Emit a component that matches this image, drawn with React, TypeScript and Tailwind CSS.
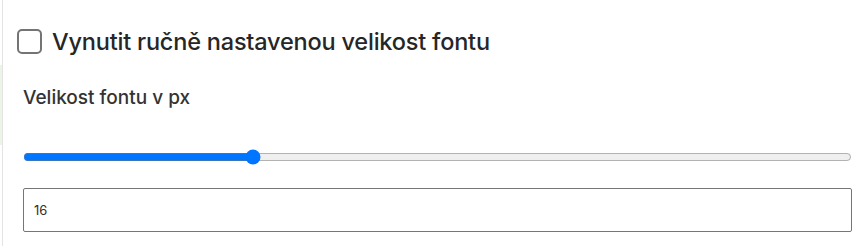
import { useState } from 'react'

export default function App() {
  const [forced, setForced] = useState(false)
  const [size, setSize] = useState(16)

  return (
    <div className="relative flex h-[246px] w-[864px] overflow-hidden bg-white font-['Inter','Liberation_Sans',sans-serif]">
      {/* left rail of the settings panel */}
      <div className="flex w-[3px] shrink-0 flex-col border-r border-[#e3e3e3]">
        <div className="h-[65px]" />
        <div className="h-[80px] bg-[#eaf5e6]" />
      </div>

      <div className="flex flex-1 flex-col pl-[20px] pr-[12px]">
        <label className="mt-[29px] -ml-[6px] flex cursor-pointer items-center gap-[10px]">
          <input
            type="checkbox"
            checked={forced}
            onChange={e => setForced(e.target.checked)}
            className="h-[25px] w-[25px] shrink-0 appearance-none rounded-[5px] border-2 border-[#747474] bg-white checked:bg-[#0075ff]"
          />
          <span className="text-[23.5px] font-medium leading-[25px] tracking-[-0.2px] text-[#262626]">
            Vynutit ručně nastavenou velikost fontu
          </span>
        </label>

        <p className="mt-[32px] text-[19px] font-medium leading-[24px] text-[#333333]">Velikost fontu v px</p>

        <input
          type="range"
          min={10}
          max={32}
          value={size}
          onChange={e => setSize(Number(e.target.value))}
          className="mt-[39px] w-full"
        />

        <input
          type="text"
          value={size}
          onChange={e => setSize(Number(e.target.value) || 0)}
          className="mt-[23px] h-[44px] w-full rounded-[2px] border border-[#767676] px-[10px] text-[13px] text-[#3a2a1a] outline-none"
        />
      </div>
    </div>
  )
}
